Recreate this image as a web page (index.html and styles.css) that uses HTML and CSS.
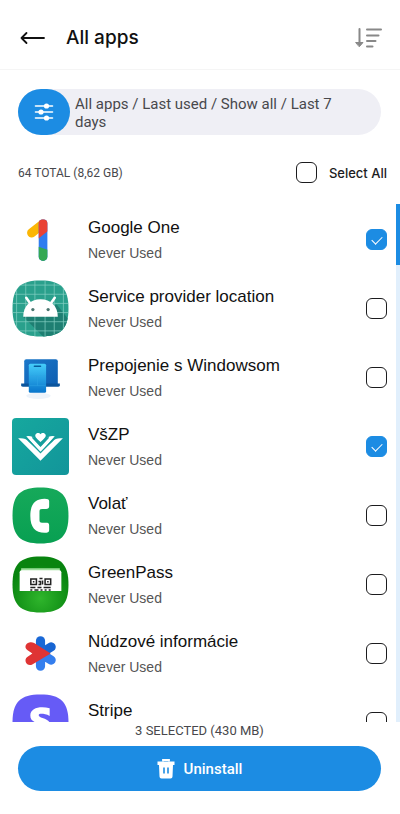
FILE: index.html
```
<!DOCTYPE html>
<html lang="en">

<head>
    <meta charset="utf-8">
    <meta name="viewport" content="width=device-width, initial-scale=1">
    <title>All apps</title>
    <link rel="stylesheet" href="styles.css">
</head>

<body>
<header class="header">
    <button class="icon-button" type="button" aria-label="Back">
        <svg width="26" height="16" viewBox="0 0 26 16" fill="none" stroke="#111" stroke-width="1.8" stroke-linecap="round" stroke-linejoin="round">
            <path d="M24 8H1.500M6.500 3 1.500 8l5 5"/>
        </svg>
    </button>
    <h1 class="title">All apps</h1>
    <button class="icon-button" type="button" aria-label="Sort">
        <svg width="27" height="20" viewBox="0 0 27 20" fill="none" stroke="#888" stroke-width="2" stroke-linecap="round">
            <path d="M4.500 1v14M12 1.500h14M12 7.500h11.500M12 13h8.500M12 18.500h5.500"/>
            <path d="M1 14.500h7L4.500 18.500z" fill="#888" stroke-linejoin="round" stroke-width="1"/>
        </svg>
    </button>
</header>

<main class="content">
    <button class="filter" type="button">
        <span class="filter-icon">
            <svg width="20" height="18" viewBox="0 0 20 18" fill="#fff" stroke="#fff" stroke-width="1.600" stroke-linecap="round">
                <path d="M1.500 3h17M1.500 9h17M1.500 15h17"/>
                <g stroke="none">
                    <circle cx="12.500" cy="3" r="2.600"/>
                    <circle cx="7" cy="9" r="2.600"/>
                    <circle cx="12.500" cy="15" r="2.600"/>
                </g>
            </svg>
        </span>
        <span class="filter-text">All apps / Last used / Show all / Last 7 days</span>
    </button>

    <div class="summary">
        <span class="total">64 TOTAL (8,62 GB)</span>
        <label class="select-all"><input class="check" type="checkbox"> Select All</label>
    </div>

    <div class="list">
        <ul class="apps">
            <li>
                <label class="app">
                    <svg class="app-icon" viewBox="0 0 56 56">
                        <defs>
                            <clipPath id="one"><rect x="26" y="8" width="9" height="41" rx="4.500"/></clipPath>
                        </defs>
                        <path d="M19.300 21.500 30 13" stroke="#fbb605" stroke-width="9" stroke-linecap="round"/>
                        <g clip-path="url(#one)">
                            <path d="M26 8h9v41h-9z" fill="#2f7cf0"/>
                            <path d="M26 8h9v12l-9 7z" fill="#e94235"/>
                            <path d="M26 35l9 3v11h-9z" fill="#34a853"/>
                        </g>
                    </svg>
                    <span class="info"><span class="name">Google One</span><span class="used">Never Used</span></span>
                    <input class="check" type="checkbox" checked>
                </label>
            </li>
            <li>
                <label class="app">
                    <svg class="app-icon" viewBox="0 0 56 56">
                        <defs>
                            <clipPath id="tile"><path id="squircle" d="M28 .5C48 .5 55.500 8 55.500 28S48 55.500 28 55.500.5 48 .5 28 8 .5 28 .5z"/></clipPath>
                        </defs>
                        <g clip-path="url(#tile)">
                            <path d="M0 0h56v56H0z" fill="#2aa08c"/>
                            <path d="M11 36 34 59h25V43L44 24z" fill="#1e7f72"/>
                            <path d="M4.500 0v56M13.500 0v56M22.500 0v56M32.500 0v56M41.500 0v56M50.500 0v56M0 5h56M0 14h56M0 23h56M0 32h56M0 41h56M0 50h56" stroke="#84cfc2" stroke-width=".7"/>
                        </g>
                        <path d="M11 36c0-10 7-17 17-17s17 7 17 17z" fill="#fff"/>
                        <path d="m14 17.500 5 7M42 17.500l-5 7" stroke="#fff" stroke-width="2.500" stroke-linecap="round"/>
                        <circle cx="20.500" cy="29" r="1.600" fill="#4b7670"/>
                        <circle cx="35.500" cy="29" r="1.600" fill="#4b7670"/>
                    </svg>
                    <span class="info"><span class="name">Service provider location</span><span class="used">Never Used</span></span>
                    <input class="check" type="checkbox">
                </label>
            </li>
            <li>
                <label class="app">
                    <svg class="app-icon" viewBox="0 0 56 56">
                        <defs>
                            <linearGradient id="laptop" x2="1" y2="1"><stop stop-color="#1b78ca"/><stop offset="1" stop-color="#0d5db0"/></linearGradient>
                            <linearGradient id="phone" x2="0" y2="1"><stop stop-color="#45cdfa"/><stop offset="1" stop-color="#0875cc"/></linearGradient>
                        </defs>
                        <ellipse cx="26" cy="46" rx="12" ry="3" fill="#edf3fa"/>
                        <rect x="12" y="10" width="33" height="26" rx="2" fill="url(#laptop)"/>
                        <path d="M9 34h38v1.500q0 1.500-2 1.500H11q-2 0-2-1.500z" fill="#0b559d"/>
                        <rect x="16.500" y="14.500" width="17" height="28.500" rx="1.500" fill="url(#phone)"/>
                        <path d="M22 17h6" stroke="#075b9c" stroke-width="1.500" stroke-linecap="round"/>
                        <path d="M17 27h16M17 36h16M25 27v9" stroke="#30a4e5" stroke-width=".5"/>
                    </svg>
                    <span class="info"><span class="name">Prepojenie s Windowsom</span><span class="used">Never Used</span></span>
                    <input class="check" type="checkbox">
                </label>
            </li>
            <li>
                <label class="app">
                    <svg class="app-icon" viewBox="0 0 56 56">
                        <defs>
                            <linearGradient id="teal" x2="1" y2="1"><stop stop-color="#16a89e"/><stop offset="1" stop-color="#12959a"/></linearGradient>
                        </defs>
                        <rect width="56" height="56" rx="4" fill="url(#teal)"/>
                        <g fill="#fff">
                            <path d="M6 20q7-1 10 3l12 11 12-11q3-4 10-3L28 42z"/>
                            <path d="M14 18q6-1 8 3l6 7 6-7q2-4 8-3L28 34z"/>
                            <path d="M28 23.500C25 21 22 18.500 23 16.500c1-2.500 4-2 5-.5 1-1.500 4-2 5 .5 1 2-2 4.500-5 7z"/>
                        </g>
                        <path d="M13.500 19 28 34l14.500-15M20 19l8 8.500 8-8.500" fill="none" stroke="#149e9b" stroke-width="1.300"/>
                    </svg>
                    <span class="info"><span class="name">VšZP</span><span class="used">Never Used</span></span>
                    <input class="check" type="checkbox" checked>
                </label>
            </li>
            <li>
                <label class="app">
                    <svg class="app-icon" viewBox="0 0 56 56">
                        <defs>
                            <linearGradient id="call" x2="0" y2="1"><stop stop-color="#16a95a"/><stop offset="1" stop-color="#08a052"/></linearGradient>
                        </defs>
                        <use href="#squircle" fill="url(#call)"/>
                        <path d="M32 11.500c3 0 4.500.6 4.500 2.500v5c0 2-1 2.500-3 2.500h-4c-2 0-2.500.8-2.500 2.500v8.500c0 1.700.5 2.500 2.500 2.500h4c2 0 3 .5 3 2.500v5c0 1.900-1.500 2.500-4.500 2.500-9 0-14-5-14-16.700S23 11.500 32 11.500z" fill="#fff"/>
                    </svg>
                    <span class="info"><span class="name">Volať</span><span class="used">Never Used</span></span>
                    <input class="check" type="checkbox">
                </label>
            </li>
            <li>
                <label class="app">
                    <svg class="app-icon" viewBox="0 0 56 56">
                        <defs>
                            <radialGradient id="pass" cx=".5" cy=".75" r=".6"><stop stop-color="#2fb52c"/><stop offset="1" stop-color="#08840f"/></radialGradient>
                        </defs>
                        <use href="#squircle" fill="url(#pass)"/>
                        <path d="M9 12h38v4H9z" fill="#9cdf9b"/>
                        <path d="M7.500 16q0-2 2-2h37q2 0 2 2v18.500h-41z" fill="#fff"/>
                        <g fill="none" stroke="#222" stroke-width="1.500">
                            <path d="M18.500 22.500h5.500v5.500h-5.500zM32.500 22.500H38v5.500h-5.500z"/>
                            <path d="M20.500 25.300h1.500M34.500 25.300H36M27 22h3M26 25h2v3h-2M30 24v4M18 31h5M25 31h4M31 31h7M18 33.500h2M22 33.500h4M28 33.500h2M32 33.500h2M36 33.500h2"/>
                        </g>
                    </svg>
                    <span class="info"><span class="name">GreenPass</span><span class="used">Never Used</span></span>
                    <input class="check" type="checkbox">
                </label>
            </li>
            <li>
                <label class="app">
                    <svg class="app-icon" viewBox="0 0 56 56" stroke-width="9" stroke-linecap="round">
                        <path d="m28 28 10.500-6.500" stroke="#1865d2"/>
                        <path d="M28 28V15.500" stroke="#1968d6"/>
                        <path d="m28 28 10.500 6.500M28 28v12.500" stroke="#347eee"/>
                        <path d="M17 17.200c1.500-.6 3.300-.4 4.800.6L38 28 19.500 39c-5 2-8.500-4.500-4.500-7.500l5-3.500-5-3.500c-3-2-2-6.500 2-7.300z" fill="#df3434"/>
                    </svg>
                    <span class="info"><span class="name">Núdzové informácie</span><span class="used">Never Used</span></span>
                    <input class="check" type="checkbox">
                </label>
            </li>
            <li>
                <label class="app">
                    <svg class="app-icon" viewBox="0 0 56 56">
                        <use href="#squircle" fill="#665bf6"/>
                        <path d="M37 14v7.500c-3-1.500-6-2-8-2-4.500 0-3 3 1 4 5 1.500 8 4 8 8 0 6-5 9-11 9-3 0-6-.6-9-2v-7.500c3 1.500 6 2.500 9 2.500 4 0 4-2.500 0-4-6-2-9-4-9-8.500C18 13.500 28 11.500 37 14z" fill="#fff"/>
                    </svg>
                    <span class="info"><span class="name">Stripe</span></span>
                    <input class="check" type="checkbox">
                </label>
            </li>
        </ul>
        <div class="scrollbar"><div class="thumb"></div></div>
    </div>
</main>

<footer class="footer">
    <div class="selected">3 SELECTED (430 MB)</div>
    <button class="uninstall" type="button">
        <svg width="18" height="20" viewBox="0 0 18 20">
            <path d="M6 2.500V1h6v1.500" fill="none" stroke="#fff" stroke-width="1.800"/>
            <path d="M.5 2.500h17V6H16l-.5 11.500q0 2-2 2h-9q-2 0-2-2L2 6H.5z" fill="#fff"/>
            <path d="M7 8.500v6M11 8.500v6" stroke="#1c8ce3" stroke-width="1.600"/>
        </svg>
        Uninstall
    </button>
</footer>
</body>

</html>
```

FILE: styles.css
```
* {
    box-sizing: border-box;
}

body {
    margin: 0;
    height: 100vh;
    display: flex;
    flex-direction: column;
    background: #fff;
    color: #1c1c1e;
    font-family: Roboto, sans-serif;
}

button {
    border: none;
    padding: 0;
    background: none;
    font-family: inherit;
    cursor: pointer;
}

svg {
    display: block;
    flex: none;
}

.header {
    display: flex;
    align-items: center;
    gap: 20px;
    padding: 6px 18px 0 20px;
    height: 70px;
    border-bottom: 1px solid #f5f5f5;
}

.title {
    flex: 1;
    margin: 0;
    color: #111;
    font-family: Inter, sans-serif;
    font-size: 19px;
    line-height: 24px;
    font-weight: 500;
}

.content {
    flex: 1;
    min-height: 0;
    display: flex;
    flex-direction: column;
}

.filter {
    display: flex;
    align-items: center;
    gap: 5px;
    height: 46px;
    margin: 19px 19px 0 18px;
    padding-right: 32px;
    border-radius: 23px;
    background: #efeff5;
    text-align: left;
}

.filter-icon {
    display: flex;
    align-items: center;
    justify-content: center;
    flex: none;
    width: 52px;
    height: 46px;
    border-radius: 23px;
    background: #1c8ce3;
}

.filter-text {
    padding-top: 2px;
    color: #48484c;
    font-size: 15px;
    line-height: 18px;
}

.summary {
    display: flex;
    align-items: center;
    justify-content: space-between;
    height: 69px;
    padding: 6px 13px 0 18px;
}

.total {
    color: #48484c;
    font-size: 12px;
}

.select-all {
    display: flex;
    align-items: center;
    gap: 12px;
    font-family: Inter, sans-serif;
    font-size: 13px;
    font-weight: 500;
}

.check {
    appearance: none;
    flex: none;
    width: 21px;
    height: 21px;
    margin: 0;
    border: 1px solid #1c1c1e;
    border-radius: 6px;
}

.check:checked {
    border-color: #1c8ce3;
    background: #1c8ce3;
}

.check:checked::before {
    content: "";
    display: block;
    width: 5px;
    height: 9px;
    margin: 4px auto 0;
    border: solid #fff;
    border-width: 0 1px 1px 0;
    transform: rotate(45deg);
}

.list {
    flex: 1;
    min-height: 0;
    display: flex;
    overflow: hidden;
}

.apps {
    flex: 1;
    margin: 0;
    padding: 1px 0 0;
    list-style: none;
}

.app {
    display: flex;
    align-items: center;
    height: 69px;
    padding: 0 9px 0 12px;
}

.app-icon {
    width: 57px;
    height: 57px;
    margin-right: 19px;
}

.info {
    flex: 1;
    display: flex;
    flex-direction: column;
    height: 50px;
    font-family: "Liberation Sans", sans-serif;
}

.name {
    color: #111;
    font-size: 17px;
    line-height: 26px;
}

.used {
    color: #555;
    font-size: 14px;
    line-height: 24px;
}

.scrollbar {
    width: 4px;
    background: #e1effc;
}

.thumb {
    height: 61px;
    background: #1c8ce3;
}

.footer {
    padding: 0 19px 23px 18px;
}

.selected {
    color: #48484c;
    font-size: 13px;
    line-height: 18px;
    padding-bottom: 6px;
    text-align: center;
}

.uninstall {
    display: flex;
    align-items: center;
    justify-content: center;
    gap: 9px;
    width: 100%;
    height: 45px;
    border-radius: 23px;
    background: #1c8ce3;
    color: #fff;
    font-size: 15px;
    font-weight: 500;
}
```
